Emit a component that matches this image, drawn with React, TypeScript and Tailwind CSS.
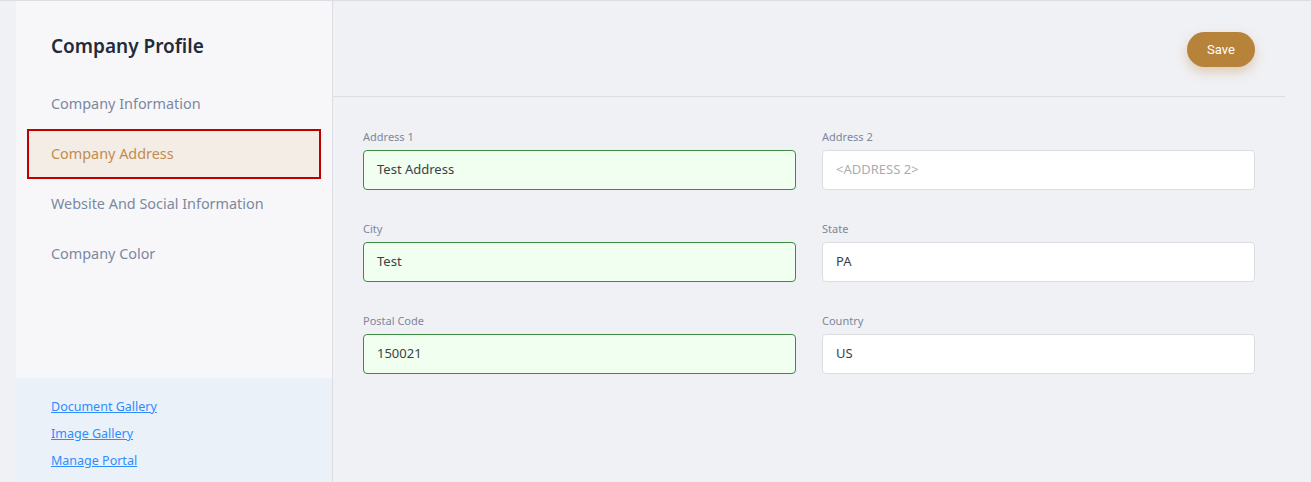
import React from "react";

const font = { fontFamily: '"Noto Sans", "Open Sans", sans-serif' };

function Field({ label, value, placeholder, valid }: { label: string; value?: string; placeholder?: string; valid?: boolean }) {
  return (
    <div className="flex flex-col">
      <label className="text-[11px] leading-[14px] text-[#7d879c] mb-[6px]">{label}</label>
      <div
        className={
          "h-[40px] rounded-[4px] border flex items-center px-[13px] text-[13px] " +
          (valid ? "bg-[#f0fff0] border-[#3d8b45] text-[#3a3f4a]" : "bg-white border-[#dcdde2] text-[#3a3f4a]")
        }
      >
        {value ? <span>{value}</span> : <span className="text-[#adadad]">{placeholder}</span>}
      </div>
    </div>
  );
}

export default function App() {
  const items = ["Company Information", "Company Address", "Website And Social Information", "Company Color"];
  return (
    <div className="w-[1311px] h-[482px] flex bg-[#f0f1f5] border-t border-[#dcdde2] overflow-hidden" style={font}>
      <div className="w-[16px] shrink-0" />
      <aside className="w-[317px] shrink-0 flex flex-col bg-[#f7f7f9] border-r border-[#dcdde2]">
        <div className="flex-1 pt-[31px]">
          <h1 className="pl-[35px] text-[19px] leading-[28px] font-semibold text-[#222b38]">Company Profile</h1>
          <nav className="mt-[19px] flex flex-col">
            {items.map((it, i) => (
              <div
                key={it}
                className={
                  "mx-[11px] h-[50px] flex items-center pl-[22px] border-2 text-[14.4px] " +
                  (i === 1 ? "border-[#c00000] bg-[#f3ede6] text-[#c28b4d]" : "border-transparent text-[#7b88a0]")
                }
              >
                {it}
              </div>
            ))}
          </nav>
        </div>
        <div className="h-[104px] bg-[#eaf1f9] pt-[15px] pl-[35px] flex flex-col">
          {["Document Gallery", "Image Gallery", "Manage Portal"].map((l) => (
            <a key={l} href="#" className="text-[12.5px] leading-[27px] text-[#2f8cff] underline w-fit">
              {l}
            </a>
          ))}
        </div>
      </aside>
      <main className="flex-1 flex flex-col mr-[26px]">
        <div className="h-[96px] border-b border-[#dcdde2] flex items-center justify-end pr-[30px] pt-[2px]">
          <button
            className="h-[35px] w-[68px] rounded-full bg-[#b7833a] text-white text-[13px] shadow-[0_5px_12px_rgba(183,131,58,0.35)]"
            style={{ fontFamily: 'Roboto, "Liberation Sans", sans-serif' }}
          >
            Save
          </button>
        </div>
        <div className="px-[30px] pt-[33px] grid grid-cols-2 gap-x-[26px] gap-y-[32px]">
          <Field label="Address 1" value="Test Address" valid />
          <Field label="Address 2" placeholder="<ADDRESS 2>" />
          <Field label="City" value="Test" valid />
          <Field label="State" value="PA" />
          <Field label="Postal Code" value="150021" valid />
          <Field label="Country" value="US" />
        </div>
      </main>
    </div>
  );
}
